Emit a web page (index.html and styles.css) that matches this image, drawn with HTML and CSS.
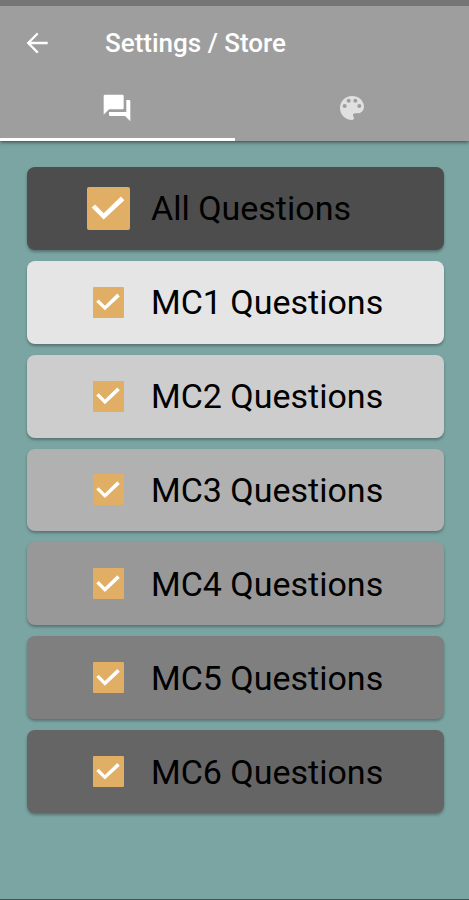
FILE: index.html
```
<!DOCTYPE html>
<html lang="en">
<head>
    <meta charset="utf-8">
    <meta name="viewport" content="width=device-width, initial-scale=1">
    <title>Settings / Store</title>
    <link rel="stylesheet" href="styles.css">
</head>
<body>
    <header class="app-bar">
        <div class="toolbar">
            <button class="back-button" type="button" aria-label="Back">
                <svg class="icon" viewBox="0 0 24 24"><path d="M20 11.1H7.5l5.6-5.6L12 4.2 4.2 12l7.8 7.8 1.2-1.2-5.7-5.7H20z"/></svg>
            </button>
            <h1>Settings / Store</h1>
        </div>
        <nav class="tabs">
            <button class="tab active" type="button" aria-label="Questions">
                <svg class="icon" viewBox="0 0 24 24"><path d="M21 6h-2v9H6v2c0 .55.45 1 1 1h11l4 4V7c0-.55-.45-1-1-1zm-4 6V3c0-.55-.45-1-1-1H3c-.55 0-1 .45-1 1v14l4-4h10c.55 0 1-.45 1-1z"/></svg>
            </button>
            <button class="tab" type="button" aria-label="Themes">
                <svg class="icon" viewBox="0 0 24 24"><path d="M12 3c-4.97 0-9 4.03-9 9s4.03 9 9 9c.83 0 1.5-.67 1.5-1.5 0-.39-.15-.74-.39-1.01-.23-.26-.38-.61-.38-.99 0-.83.67-1.5 1.5-1.5H16c2.76 0 5-2.24 5-5 0-4.42-4.03-8-9-8zm-5.5 9c-.83 0-1.5-.67-1.5-1.5S5.67 9 6.5 9 8 9.67 8 10.5 7.33 12 6.5 12zm3-4C8.67 8 8 7.33 8 6.5S8.67 5 9.5 5s1.5.67 1.5 1.5S10.33 8 9.5 8zm5 0c-.83 0-1.5-.67-1.5-1.5S13.67 5 14.5 5s1.5.67 1.5 1.5S15.33 8 14.5 8zm3 4c-.83 0-1.5-.67-1.5-1.5S16.67 9 17.5 9s1.5.67 1.5 1.5-.67 1.5-1.5 1.5z"/></svg>
            </button>
        </nav>
    </header>

    <main class="question-list">
        <label class="card all"><span class="box"><input type="checkbox" checked></span>All Questions</label>
        <label class="card mc1"><span class="box"><input type="checkbox" checked></span>MC1 Questions</label>
        <label class="card mc2"><span class="box"><input type="checkbox" checked></span>MC2 Questions</label>
        <label class="card mc3"><span class="box"><input type="checkbox" checked></span>MC3 Questions</label>
        <label class="card mc4"><span class="box"><input type="checkbox" checked></span>MC4 Questions</label>
        <label class="card mc5"><span class="box"><input type="checkbox" checked></span>MC5 Questions</label>
        <label class="card mc6"><span class="box"><input type="checkbox" checked></span>MC6 Questions</label>
    </main>
</body>
</html>
```
FILE: styles.css
```
* {
    box-sizing: border-box;
}

body {
    display: flex;
    flex-direction: column;
    min-height: 100vh;
    margin: 0;
    background-color: #7aa5a3;
    border-bottom: 1px solid #3f5655;
    font-family: Roboto, "Liberation Sans", sans-serif;
}

button {
    padding: 0;
    border: none;
    background: none;
    color: inherit;
    cursor: pointer;
}

.icon {
    display: block;
    width: 32px;
    height: 32px;
    fill: currentColor;
}

/* Header */
.app-bar {
    background-color: #9e9e9e;
    border-top: 6px solid #757575;
    color: #ffffff;
    box-shadow: 0 1px 4px rgba(0, 0, 0, 0.6);
}

.toolbar {
    display: flex;
    align-items: center;
    gap: 52px;
    height: 73px;
    padding: 0 21px;
}

.toolbar h1 {
    margin: 0;
    font-size: 26px;
    font-weight: 500;
    line-height: 32px;
}

.tabs {
    display: grid;
    grid-template-columns: 1fr 1fr;
}

.tab {
    display: flex;
    justify-content: center;
    height: 62px;
    padding-top: 13px;
    border-bottom: 3px solid transparent;
    color: #e0e0e0;
}

.tab.active {
    border-bottom-color: #ffffff;
    color: #ffffff;
}

/* Question packs */
.question-list {
    flex: 1;
    display: grid;
    grid-auto-rows: 1fr;
    gap: 11px;
    padding: 26px 25px 86px 27px;
}

.card {
    display: flex;
    align-items: center;
    gap: 21px;
    min-height: 64px;
    padding-left: 59px;
    border-radius: 8px;
    box-shadow: 0 2px 3px rgba(0, 0, 0, 0.3);
    color: #000000;
    font-size: 34px;
    line-height: 40px;
    cursor: pointer;
}

.box {
    display: flex;
    justify-content: center;
    width: 44px;
}

.box input {
    appearance: none;
    width: 31px;
    height: 31px;
    margin: 0;
    border-radius: 1px;
    background-color: #e0ae64;
    cursor: pointer;
}

.all .box input {
    width: 43px;
    height: 43px;
    border-radius: 2px;
}

.box input:checked::before {
    content: "";
    display: block;
    height: 100%;
    background-color: #ffffff;
    clip-path: polygon(12% 48%, 20% 41%, 40% 61%, 80% 22%, 88% 31%, 40% 76%);
}

.all { background-color: #4d4d4d; }
.mc1 { background-color: #e5e5e5; }
.mc2 { background-color: #cdcdcd; }
.mc3 { background-color: #b1b1b1; }
.mc4 { background-color: #989898; }
.mc5 { background-color: #7f7f7f; }
.mc6 { background-color: #656565; }
```
